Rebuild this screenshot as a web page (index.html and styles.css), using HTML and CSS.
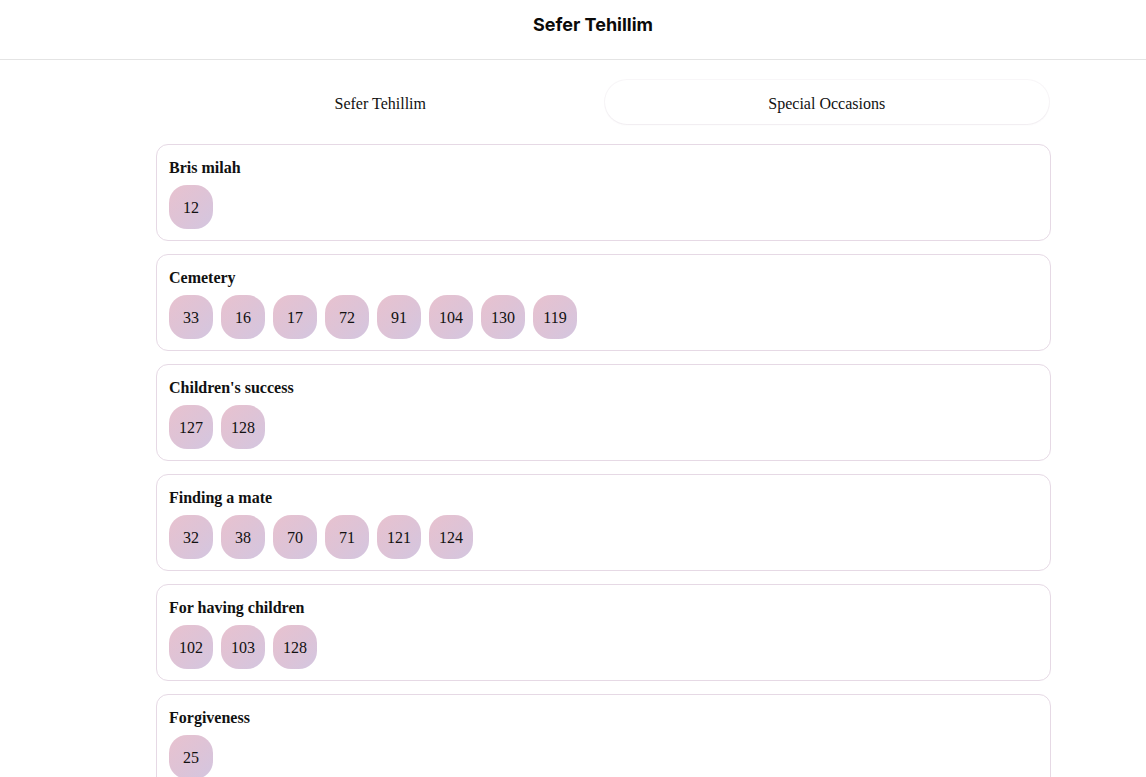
FILE: index.html
```html
<!DOCTYPE html>
<html lang="en">
<head>
<meta charset="utf-8">
<title>Sefer Tehillim</title>
<link rel="stylesheet" href="styles.css">
</head>
<body>
<header class="topbar"><h1 class="topbar-title">Sefer Tehillim</h1></header>
<main class="content">
  <nav class="tabs">
    <button class="tab">Sefer Tehillim</button>
    <button class="tab tab-active">Special Occasions</button>
  </nav>
  <section class="list">
    <div class="card"><h2 class="card-title">Bris milah</h2><div class="chips"><span class="chip">12</span></div></div>
    <div class="card"><h2 class="card-title">Cemetery</h2><div class="chips"><span class="chip">33</span><span class="chip">16</span><span class="chip">17</span><span class="chip">72</span><span class="chip">91</span><span class="chip">104</span><span class="chip">130</span><span class="chip">119</span></div></div>
    <div class="card"><h2 class="card-title">Children's success</h2><div class="chips"><span class="chip">127</span><span class="chip">128</span></div></div>
    <div class="card"><h2 class="card-title">Finding a mate</h2><div class="chips"><span class="chip">32</span><span class="chip">38</span><span class="chip">70</span><span class="chip">71</span><span class="chip">121</span><span class="chip">124</span></div></div>
    <div class="card"><h2 class="card-title">For having children</h2><div class="chips"><span class="chip">102</span><span class="chip">103</span><span class="chip">128</span></div></div>
    <div class="card"><h2 class="card-title">Forgiveness</h2><div class="chips"><span class="chip">25</span></div></div>
    <div class="card"><h2 class="card-title">Gratitude</h2><div class="chips"><span class="chip">100</span></div></div>
  </section>
</main>
</body>
</html>
```
FILE: styles.css
```css
* { box-sizing: border-box; }
html, body { margin: 0; padding: 0; background: #ffffff; }
body { font-family: "Liberation Serif", "Times New Roman", serif; color: #111111; }

.topbar {
  height: 60px;
  border-bottom: 1px solid #e4e4e4;
  display: flex;
  align-items: center;
  justify-content: center;
  padding-left: 40px;
  padding-bottom: 10px;
}
.topbar-title {
  margin: 0;
  font-family: Inter, "Liberation Sans", sans-serif;
  font-weight: 700;
  font-size: 18px;
  color: #0a0a0a;
}

.content {
  width: 895px;
  margin-left: 156px;
  padding-top: 18px;
}

.tabs {
  display: flex;
  padding: 2px;
  gap: 2px;
}
.tab {
  flex: 1;
  height: 44px;
  border: 0;
  background: transparent;
  border-radius: 22px;
  font-family: "Liberation Serif", "Times New Roman", serif;
  font-size: 16px;
  color: #111111;
  padding: 3px 0 0;
}
.tab-active {
  background: #ffffff;
  box-shadow: 0 1px 2px rgba(120, 90, 120, 0.06), 0 0 0 1px rgba(235, 228, 235, 0.35);
}

.list {
  margin-top: 18px;
  display: flex;
  flex-direction: column;
  gap: 13px;
  padding-bottom: 40px;
}
.card {
  border: 1px solid #e6d9e5;
  border-radius: 12px;
  padding: 12px 12px 11px;
  background: #ffffff;
}
.card-title {
  margin: 0 0 6px;
  font-size: 16px;
  line-height: 22px;
  font-weight: 700;
  color: #111111;
}
.chips {
  display: flex;
  flex-wrap: wrap;
  gap: 8px;
}
.chip {
  width: 44px;
  height: 44px;
  border-radius: 18px;
  background: linear-gradient(135deg, #e8c2cf 0%, #dec3d6 50%, #d3c6e0 100%);
  display: flex;
  align-items: center;
  justify-content: center;
  font-size: 16px;
  padding-top: 2px;
  color: #111111;
}
```
